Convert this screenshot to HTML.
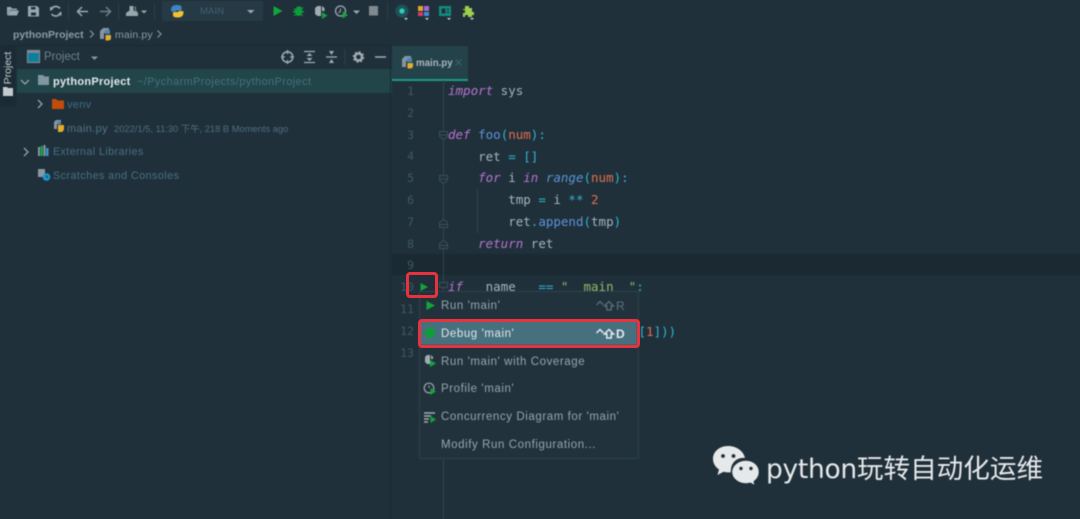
<!DOCTYPE html>
<html><head><meta charset="utf-8">
<style>
html,body{margin:0;padding:0;background:#20303b;}
#r{position:relative;width:1080px;height:519px;overflow:hidden;background:#20303b;font-family:"Liberation Sans","Noto Sans CJK SC",sans-serif;}
#b{position:absolute;left:0;top:0;width:1080px;height:519px;filter:blur(.5px);}
.a{position:absolute;white-space:pre;}
.t{position:absolute;white-space:pre;font-size:11px;line-height:14px;letter-spacing:.25px;color:#4d7382;}
.c{position:absolute;left:448px;white-space:pre;font-family:"DejaVu Sans Mono","Liberation Mono",monospace;font-size:12.5px;line-height:16px;color:#a4b4bc;}
.n{position:absolute;left:396px;width:18px;text-align:right;font-family:"DejaVu Sans Mono",monospace;font-size:11.5px;line-height:16px;color:#3e5863;}
.k{color:#b874cf;font-style:italic}.f{color:#5b94d8}.p{color:#e0714f}.o{color:#2eb6cf}.fi{color:#5b94d8;font-style:italic}.g{color:#93b86c}
.m{position:absolute;left:441px;white-space:pre;font-size:11.5px;line-height:14px;letter-spacing:.58px;color:#95a5ad;}
svg{position:absolute;overflow:visible}
</style></head><body>
<div id="r"><div id="b">
<!-- toolbar -->
<div class="a" style="left:162px;top:1px;width:101px;height:20px;background:#263a45"></div>
<svg style="left:0;top:0" width="480" height="24">
<path d="M7 15V7h4l1 1.500h5V10H9.500L7.500 15zM7.500 15.500h9.500l2-5H9.500z" fill="#9aa7ae"/>
<path d="M28 6h9l2 2v8.500H28z" fill="#9aa7ae"/>
<path d="M31 7h4.500v2.500H31zM31 12.500h5v3h-5z" fill="#20303b"/>
<path d="M60 8.500A5.500 5.500 0 0 0 51.500 8.500M51.500 14A5.500 5.500 0 0 0 60 14" fill="none" stroke="#9aa7ae" stroke-width="1.700"/>
<path d="M50 6.500l3.500 2.500-3.500 2zM61.500 16l-3.500-2.500 3.500-2z" fill="#9aa7ae"/>
<path d="M68.500 3v17M118.500 3v17M154.500 3v17M387.500 3v17" stroke="#2d404b"/>
<path d="M88 11.500H78M82 7l-4.500 4.500L82 16" fill="none" stroke="#9aa7ae" stroke-width="1.500"/>
<path d="M100 11.500h10M106 7l4.500 4.500L106 16" fill="none" stroke="#6f7f88" stroke-width="1.500"/>
<path d="M129.500 6h4v4.500l4.500 2.500v3H126v-3l3.500-2.500z" fill="#9aa7ae"/><path d="M134.500 6.500h1.500v4l2 1.500v1.500l-3-2z" fill="#788790"/>
<path d="M141 10.500h6l-3 3zM247 10h7.500l-3.750 3.500zM353 10.500h7l-3.500 3.500z" fill="#9aa7ae"/>
<path d="M171 10q0-5 5.500-5t5 2.500v3h-5.500v1h-3.500q-1.500 0-1.500-1.500z" fill="#3d86c6"/>
<path d="M183.500 12q0 5.500-5.500 5.500t-5-2.500v-3h5.500v-1h3.500q1.500 0 1.500 1z" fill="#f1c232"/>
<path d="M273.500 6l9 5-9 5z" fill="#12a53a"/>
<path d="M297 6.500h4v1.500l2-1v1.500l-1 1v1.500h2v1.500h-2l-.500 1.500 1.500 1v1l-2.500-1-1 1h-2l-1-1-2.500 1v-1l1.500-1-.500-1.500h-2v-1.500h2V10.500l-1-1V8l2 1z" fill="#0f9d3a"/>
<path d="M321 6h-3.500L315 8v6l2.500 2H321zM322 6l2.500 2v3H322z" fill="#a0acb2"/>
<path d="M322 12l5.500 3.500-5.500 3.500z" fill="#12a53a"/>
<circle cx="340.500" cy="11" r="5" fill="none" stroke="#9aa7ae" stroke-width="1.300"/><path d="M340.500 8.500v2.500l-2 2" fill="none" stroke="#9aa7ae"/>
<path d="M342.500 11.500l5.500 3.500-5.500 3.500z" fill="#12a53a"/>
<rect x="369" y="6" width="9" height="9.500" fill="#7f8a90"/>
<circle cx="402" cy="11" r="6.500" fill="#1f5257"/><circle cx="402" cy="11" r="2.600" fill="#2bd0bf"/>
<path d="M418 6h5v5h-5z" fill="#e3a52c"/><path d="M424 6h5v5h-5z" fill="#a866d5"/><path d="M418 12h5v4h-5z" fill="#d93a6a"/><path d="M424 12h5v4h-5z" fill="#3f8fd8"/>
<path d="M439 6h12v10h-12z" fill="#128c7e"/><path d="M441.500 8.500h4v5h-4zM447 8.500h2V10h-2zM447 11.500h2V13h-2z" fill="#20303b"/>
<path d="M465 6h4v2h3v4h2v3h-2v2h-4v-2h-3v2h-2v-4h2v-3h-2V9h2z" fill="#9ed04e"/>
<path d="M404 18h4l-2 2zM425 18h4l-2 2zM447 18h4l-2 2zM470 18h4l-2 2z" fill="#cfd5d8"/>
<path d="M90 30.500l3.500 3.500-3.500 3.500M157.500 30.500l3.500 3.500-3.500 3.500" fill="none" stroke="#8d9ba3" stroke-width="1.100"/>
</svg>
<div class="a" style="left:200px;top:5px;font-size:9.500px;line-height:13px;letter-spacing:.1px;color:#3f6070">MAIN</div>
<!-- breadcrumbs -->
<div class="a" style="left:13px;top:27.500px;font-size:10.500px;line-height:14px;font-weight:bold;color:#8d9ba3">pythonProject</div>
<div class="a" style="left:115px;top:27.500px;font-size:10.500px;line-height:14px;letter-spacing:.15px;color:#8d9ba3">main.py</div>
<svg style="left:99px;top:28px" width="14" height="14"><path d="M1 3l3-3h6v5H5v6H1z" fill="#8794a0"/><path d="M6 6h5V2H6z" fill="#4a86b8"/><path d="M6.500 7h5.500v3q0 2.500-3 2.500H6.500z" fill="#e5ad2a"/></svg>
<!-- strip and sidebar -->
<div class="a" style="left:0;top:45px;width:390px;height:1px;background:#1b2933"></div>
<div class="a" style="left:0;top:45px;width:16px;height:61px;background:#1b2a34"></div>
<div class="a" style="left:-13px;top:61px;width:42px;text-align:center;transform:rotate(-90deg);font-size:10.500px;line-height:14px;color:#c2cbcf">Project</div>
<svg style="left:3px;top:87px" width="10" height="9"><path d="M0 0h4l1 1h5v8H0z" fill="#c2cbcf"/></svg>
<svg style="left:27px;top:50px" width="14" height="14"><rect x=".5" y=".5" width="12" height="12" fill="#0e7e9e" stroke="#7b8a93" stroke-width="1.200"/><path d="M0 2h13" stroke="#7b8a93" stroke-width="2"/></svg>
<div class="a" style="left:44px;top:50px;font-size:11.500px;line-height:14px;letter-spacing:0;color:#6d818c">Project</div>
<svg style="left:0;top:46px" width="392" height="24">
<path d="M91 10.500h7l-3.500 3.500z" fill="#8a98a0"/>
<circle cx="287.500" cy="11" r="5.300" fill="none" stroke="#a0acb2" stroke-width="1.500"/><path d="M287.500 4v4M287.500 14v4M281 11h4M290 11h4" stroke="#a0acb2" stroke-width="1.300"/>
<path d="M304 5.500h11M304 16.500h11" stroke="#a0acb2" stroke-width="1.300"/><path d="M309.500 7l3 3h-6zM309.500 15l3-3h-6z" fill="#a0acb2"/>
<path d="M326 11h11" stroke="#a0acb2" stroke-width="1.300"/><path d="M329 5h5l-2.500 4zM329 17h5l-2.500-4z" fill="#a0acb2"/>
<path d="M345 3v16" stroke="#2d404b"/>
<circle cx="358.500" cy="11" r="3.500" fill="none" stroke="#a0acb2" stroke-width="2.400"/><circle cx="358.500" cy="11" r="5" fill="none" stroke="#a0acb2" stroke-width="1.500" stroke-dasharray="2 1.930"/>
<path d="M375 11h11" stroke="#a0acb2" stroke-width="1.500"/>
</svg>
<!-- project tree -->
<div class="a" style="left:17px;top:69px;width:375px;height:24px;background:#214549"></div>
<div class="a" style="left:390px;top:45px;width:1px;height:474px;background:#1c2a33"></div>
<svg style="left:0;top:70px" width="392" height="120">
<path d="M21 10l4 4 4-4M38 30l4 4-4 4M24 78l4 4-4 4" fill="none" stroke="#93a1a8" stroke-width="1.300"/>
<path d="M38 5h5l1.500 1.500H49V15H38z" fill="#7f97a3"/>
<path d="M52 29h4l1.500 1.500H64V39H52z" fill="#c24d0a"/>
<path d="M54 52l2-2h5v4h-4v5h-3z" fill="#8997a0"/><path d="M58 55h6v3q0 4-3 4h-3z" fill="#e5ad2a"/><path d="M57.500 54.500h3.500v-3h-3.500z" fill="#4a86b8"/>
<rect x="38" y="77" width="2" height="9" fill="#8997a0"/><rect x="40.500" y="76" width="2.500" height="10" fill="#16a34a"/><rect x="43.500" y="75" width="2" height="11" fill="#8997a0"/><rect x="46" y="78" width="2.500" height="8" fill="#3d92cf"/>
<rect x="38" y="99" width="7" height="8" fill="#8997a0"/><circle cx="46.500" cy="107" r="3.800" fill="#1a9ad0"/><path d="M46.500 105v2.300h1.700" stroke="#20303b" fill="none" stroke-width=".8"/>
</svg>
<div class="t" style="left:53px;top:75px;font-weight:bold;color:#e3e8ea;letter-spacing:.28px">pythonProject</div>
<div class="t" style="left:137px;top:75px;letter-spacing:.47px;color:#47707f;font-size:10.800px">~/PycharmProjects/pythonProject</div>
<div class="t" style="left:67px;top:98px;color:#3f6b80;letter-spacing:.3px">venv</div>
<div class="t" style="left:67px;top:122px;color:#4e7484;letter-spacing:.35px">main.py</div>
<div class="t" style="left:114px;top:122px;font-size:9.350px;letter-spacing:0;color:#4d6e7c">2022/1/5, 11:30 下午, 218 B Moments ago</div>
<div class="t" style="left:53px;top:145px;font-size:10.700px;letter-spacing:.42px;color:#47707f">External Libraries</div>
<div class="t" style="left:53px;top:169px;font-size:10.700px;letter-spacing:.48px;color:#47707f">Scratches and Consoles</div>
<!-- tab -->
<div class="a" style="left:392px;top:46px;width:76px;height:33px;background:#24424a"></div>
<div class="a" style="left:392px;top:79px;width:76px;height:1.500px;background:#1c9c84"></div>
<svg style="left:401px;top:56px" width="14" height="14"><path d="M1 3l3-3h6v5H5v6H1z" fill="#8794a0"/><path d="M6 6h5V2H6z" fill="#4a86b8"/><path d="M6.500 7h5.500v3q0 2.500-3 2.500H6.500z" fill="#e5ad2a"/></svg>
<div class="a" style="left:416px;top:56.500px;font-size:9.700px;font-weight:bold;line-height:14px;color:#aab5ba">main.py</div>
<svg style="left:455px;top:59px" width="8" height="8"><path d="M.5.500l6 6M6.500.500l-6 6" stroke="#41616c"/></svg>
<!-- editor -->
<div class="a" style="left:392px;top:254px;width:688px;height:21px;background:#1b2933"></div>
<div class="a" style="left:443px;top:80px;width:1px;height:439px;background:#314550"></div>
<div class="a" style="left:477px;top:189px;width:1px;height:44px;background:#314550"></div>
<svg style="left:436px;top:80px" width="16" height="220">
<g fill="#20303b" stroke="#3a4f5a"><path d="M3.500 51.500h8v5l-4 3-4-3zM3.500 95.500h8v5l-4 3-4-3z"/><path d="M3.500 147.500v-5l4-3 4 3v5zM3.500 168.500v-5l4-3 4 3v5z"/><path d="M3.500 202.500h8v5h-8z"/></g>
<path d="M4 144.500h7M4 165.500h7M4 55h7M4 99h7" stroke="#3a4f5a"/>
</svg>
<div class="n" style="top:83px">1</div><div class="n" style="top:105px">2</div><div class="n" style="top:127px">3</div><div class="n" style="top:148px">4</div><div class="n" style="top:170px">5</div><div class="n" style="top:192px">6</div><div class="n" style="top:214px">7</div><div class="n" style="top:236px">8</div><div class="n" style="top:257px">9</div><div class="n" style="top:279px">10</div><div class="n" style="top:301px">11</div><div class="n" style="top:323px">12</div><div class="n" style="top:345px">13</div>
<div class="c" style="top:83px"><span class="k">import</span> sys</div>
<div class="c" style="top:127px"><span class="k">def</span> <span class="f">foo</span><span class="o">(</span><span class="p">num</span><span class="o">):</span></div>
<div class="c" style="top:148.500px">    ret <span class="o">=</span> <span class="o">[]</span></div>
<div class="c" style="top:170px">    <span class="k">for</span> i <span class="k">in</span> <span class="fi">range</span><span class="o">(</span><span class="p">num</span><span class="o">):</span></div>
<div class="c" style="top:192px">        tmp <span class="o">=</span> i <span class="o">**</span> <span class="p">2</span></div>
<div class="c" style="top:214px">        ret<span class="o">.</span><span class="f">append</span><span class="o">(</span>tmp<span class="o">)</span></div>
<div class="c" style="top:236px">    <span class="k">return</span> ret</div>
<div class="c" style="top:279px"><span class="k">if</span> __name__ <span class="o">==</span> <span class="g">"__main__"</span><span class="o">:</span></div>
<!-- popup -->
<div class="a" style="left:419px;top:291px;width:218px;height:166px;background:#22323c;border:1px solid #2d414c"></div>
<div class="a" style="left:420px;top:321px;width:217px;height:24px;background:#47707f"></div>
<div class="c" style="top:323.500px;left:638.500px"><span class="o">[</span><span class="p">1</span><span class="o">]))</span></div>
<svg style="left:418px;top:279px" width="30" height="180">
<path d="M2.500 4l7.500 4-7.500 4z" fill="#12a53a"/>
<path d="M8.500 22l8.500 4.500-8.500 4.500z" fill="#12a53a"/>
<path d="M10 49h4l3 2v4l-1 2-2 2h-4l-2-2-1-2v-4z" fill="#0f9d3a"/>
<path d="M12 76H9l-2 2v5l2 2h3V76zM13 76l2 2v2h-2z" fill="#a0acb2"/><path d="M12 81l6 3.500-6 3.500z" fill="#12a53a"/>
<circle cx="11" cy="109" r="4.800" fill="none" stroke="#9aa7ae" stroke-width="1.200"/><path d="M11 106.500v2.500" stroke="#9aa7ae"/><path d="M12.500 109l5.500 3.500-5.500 3.500z" fill="#12a53a"/>
<path d="M6 134h11M6 137h7M6 140h5M6 143h4" stroke="#a0acb2" stroke-width="1.400"/><path d="M12.500 137l5.500 3.500-5.500 3.500z" fill="#12a53a"/>
</svg>
<div class="m" style="top:299px">Run 'main'</div>
<div class="m" style="top:327px;color:#dfe6e9">Debug 'main'</div>
<div class="m" style="top:355px">Run 'main' with Coverage</div>
<div class="m" style="top:382px">Profile 'main'</div>
<div class="m" style="top:410px">Concurrency Diagram for 'main'</div>
<div class="m" style="top:437.500px">Modify Run Configuration...</div>
<svg style="left:596px;top:299px" width="32" height="14"><path d="M.500 6l3.500-3.500L7.500 6M13 2.500l4.500 4.500h-2.300v4h-4.400V7H8.500z" fill="none" stroke="#5b7480" stroke-width="1.200"/></svg>
<div class="m" style="left:616px;top:299px;color:#5b7480;font-size:12px">R</div>
<svg style="left:596px;top:327px" width="32" height="14"><path d="M.500 6l3.500-3.500L7.500 6M13 2.500l4.500 4.500h-2.300v4h-4.400V7H8.500z" fill="none" stroke="#e6ebed" stroke-width="1.500"/></svg>
<div class="m" style="left:616px;top:327px;color:#e6ebed;font-size:12px;font-weight:bold">D</div>
<!-- watermark -->
<svg style="left:712px;top:445px" width="50" height="44">
<path d="M16 1C7.500 1 1 6.500 1 14c0 4.500 2.400 8 6 10.500L5.500 30l6-3.200c1.500.400 3 .600 4.500.600l3 0C18 18 25 12 33 13 31.500 6 24.500 1 16 1z" fill="#e6e9ea"/>
<circle cx="11" cy="11" r="1.900" fill="#20303b"/><circle cx="21.500" cy="11" r="1.900" fill="#20303b"/>
<path d="M34 15c-8 0-14.500 5.300-14.500 12S26 39 34 39c1.700 0 3-.200 4.500-.600l5 2.800-1.200-4.500c3-2.300 5.200-5.800 5.200-9.700 0-6.700-6-12-13.500-12z" fill="#e6e9ea" stroke="#20303b" stroke-width="1.500"/>
<circle cx="29" cy="23.500" r="1.700" fill="#20303b"/><circle cx="39" cy="23.500" r="1.700" fill="#20303b"/>
</svg>
<div class="a" style="left:766px;top:448px;font-family:'DejaVu Sans','Noto Sans CJK SC',sans-serif;font-size:26.500px;line-height:38px;color:#e6e9ea"><span style="letter-spacing:-.3px">python</span><span style="font-family:'Noto Sans CJK SC',sans-serif;font-size:26.600px">玩转自动化运维</span></div>
</div>
<!-- red markers -->
<div class="a" style="left:406px;top:272px;width:26px;height:20px;border:3px solid #e8333f;border-radius:4px;filter:blur(.3px)"></div>
<div class="a" style="left:418px;top:319px;width:216px;height:23px;border:3px solid #e8333f;border-radius:4px;filter:blur(.3px)"></div>
</div>
</body></html>
